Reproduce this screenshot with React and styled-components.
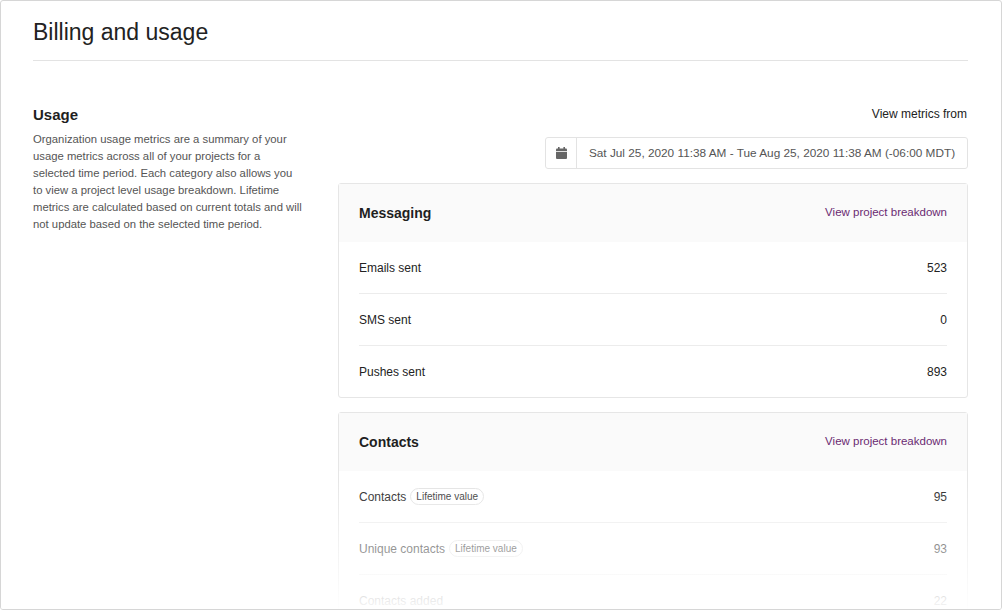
import React from 'react';
import styled, { createGlobalStyle } from 'styled-components';

const Global = createGlobalStyle`
  html, body { margin: 0; background: #fff; }
  body { font-family: "Liberation Sans", Arial, sans-serif; color: #1f1f1f; }
`;

const Page = styled.div`
  position: relative;
  width: 1002px;
  height: 610px;
  box-sizing: border-box;
  border: 1px solid #d6d6d6;
  border-radius: 3px;
  padding: 0 33px 0 32px;
  overflow: hidden;
`;

const Title = styled.h1`
  margin: 0;
  padding: 18px 0 14px;
  font-size: 23px;
  font-weight: 400;
  color: #222;
  border-bottom: 1px solid #e3e3e3;
`;

const Columns = styled.div`
  display: grid;
  grid-template-columns: 305px 1fr;
  padding-top: 45px;
`;

const Side = styled.div`
  padding-right: 35px;
`;

const SectionTitle = styled.h2`
  margin: 0 0 8px;
  font-size: 15px;
  font-weight: 700;
`;

const Desc = styled.p`
  margin: 0;
  font-size: 11.3px;
  line-height: 17px;
  color: #555;
`;

const Main = styled.div`
  display: flex;
  flex-direction: column;
  align-items: stretch;
`;

const MetricsLabel = styled.div`
  text-align: right;
  font-size: 12px;
  color: #222;
  padding: 1px 1px 0 0;
`;

const Picker = styled.div`
  align-self: flex-end;
  display: flex;
  width: 423px;
  height: 32px;
  margin: 16px 0 14px;
  border: 1px solid #e3e3e3;
  border-radius: 3px;
  box-sizing: border-box;
  font-size: 11.8px;
  color: #555;
`;

const PickerIcon = styled.div`
  width: 30px;
  display: flex;
  align-items: center;
  justify-content: center;
  border-right: 1px solid #e3e3e3;
`;

const PickerText = styled.div`
  flex: 1;
  display: flex;
  align-items: center;
  justify-content: center;
`;

const Card = styled.div`
  border: 1px solid #e6e6e6;
  border-radius: 3px;
  margin-bottom: 14px;
`;

const CardHead = styled.div`
  display: flex;
  justify-content: space-between;
  align-items: center;
  height: 58px;
  padding: 0 20px;
  background: #fafafa;
`;

const CardTitle = styled.div`
  font-size: 14px;
  font-weight: 700;
`;

const Link = styled.a`
  font-size: 11.5px;
  color: #6b2a72;
  margin-top: -2px;
`;

const Rows = styled.div`
  padding: 0 20px;
`;

const Row = styled.div`
  display: flex;
  justify-content: space-between;
  align-items: center;
  height: 51px;
  font-size: 12px;
  color: #222;
  & + & { border-top: 1px solid #ececec; }
`;

const Label = styled.span`
  display: flex;
  align-items: center;
  gap: 4px;
`;

const Pill = styled.span`
  font-size: 10px;
  padding: 2px 5px;
  border: 1px solid #e3e3e3;
  border-radius: 9px;
  color: #333;
`;

const Fade = styled.div`
  position: absolute;
  left: 0;
  right: 0;
  bottom: 0;
  height: 130px;
  background: linear-gradient(to bottom, rgba(255,255,255,0), rgba(255,255,255,0.97));
  pointer-events: none;
`;

const Calendar = () => (
  <svg width="11" height="12" viewBox="0 0 11 12">
    <rect x="2" y="0" width="1.6" height="3" fill="#666" />
    <rect x="7.4" y="0" width="1.6" height="3" fill="#666" />
    <rect x="0" y="1.5" width="11" height="10.5" rx="1" fill="#666" />
    <rect x="0" y="4" width="11" height="0.8" fill="#fff" />
  </svg>
);

const cards = [
  {
    title: 'Messaging',
    rows: [
      ['Emails sent', '523'],
      ['SMS sent', '0'],
      ['Pushes sent', '893'],
    ],
  },
  {
    title: 'Contacts',
    rows: [
      ['Contacts', '95', true],
      ['Unique contacts', '93', true],
      ['Contacts added', '22'],
    ],
  },
];

export default function App() {
  return (
    <Page>
      <Global />
      <Title>Billing and usage</Title>
      <Columns>
        <Side>
          <SectionTitle>Usage</SectionTitle>
          <Desc>
            Organization usage metrics are a summary of your usage metrics across all of your projects for a
            selected time period. Each category also allows you to view a project level usage breakdown. Lifetime
            metrics are calculated based on current totals and will not update based on the selected time period.
          </Desc>
        </Side>
        <Main>
          <MetricsLabel>View metrics from</MetricsLabel>
          <Picker>
            <PickerIcon><Calendar /></PickerIcon>
            <PickerText>Sat Jul 25, 2020 11:38 AM - Tue Aug 25, 2020 11:38 AM (-06:00 MDT)</PickerText>
          </Picker>
          {cards.map(c => (
            <Card key={c.title}>
              <CardHead>
                <CardTitle>{c.title}</CardTitle>
                <Link>View project breakdown</Link>
              </CardHead>
              <Rows>
                {c.rows.map(([l, v, life]) => (
                  <Row key={l}>
                    <Label>{l}{life && <Pill>Lifetime value</Pill>}</Label>
                    <span>{v}</span>
                  </Row>
                ))}
              </Rows>
            </Card>
          ))}
        </Main>
      </Columns>
      <Fade />
    </Page>
  );
}
